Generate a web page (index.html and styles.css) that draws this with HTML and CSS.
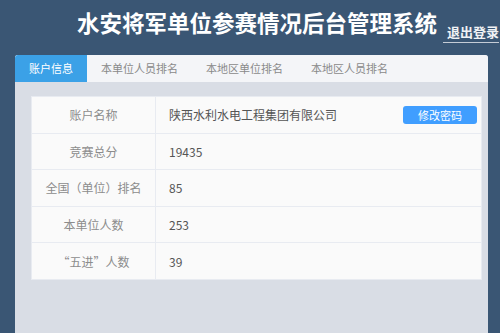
FILE: index.html
```html
<!DOCTYPE html>
<html lang="zh-CN">
<head>
  <meta charset="UTF-8">
  <title>水安将军单位参赛情况后台管理系统</title>
  <link rel="stylesheet" href="styles.css">
</head>
<body>
  <div class="header">
    <h1 class="title">水安将军单位参赛情况后台管理系统</h1>
    <a class="logout" href="#">退出登录</a>
  </div>

  <div class="panel">
    <div class="tabs">
      <div class="tab active">账户信息</div>
      <div class="tab">本单位人员排名</div>
      <div class="tab">本地区单位排名</div>
      <div class="tab">本地区人员排名</div>
    </div>

    <div class="content">
      <table class="info">
        <tr>
          <td class="label">账户名称</td>
          <td class="value">
            <span>陕西水利水电工程集团有限公司</span>
            <button class="btn">修改密码</button>
          </td>
        </tr>
        <tr>
          <td class="label">竞赛总分</td>
          <td class="value">19435</td>
        </tr>
        <tr>
          <td class="label">全国（单位）排名</td>
          <td class="value">85</td>
        </tr>
        <tr>
          <td class="label">本单位人数</td>
          <td class="value">253</td>
        </tr>
        <tr>
          <td class="label">“五进”人数</td>
          <td class="value">39</td>
        </tr>
      </table>
    </div>
  </div>
</body>
</html>
```

FILE: styles.css
```css
* {
  box-sizing: border-box;
}

body {
  margin: 0;
  height: 333px;
  overflow: hidden;
  background: #3a5674;
  font-family: "Noto Sans CJK SC", "Noto Sans", sans-serif;
}

.header {
  display: flex;
  align-items: flex-start;
  height: 55px;
  padding-left: 77px;
  white-space: nowrap;
}

.title {
  margin: 7px 0 0;
  font-size: 22.5px;
  line-height: 30px;
  font-weight: bold;
  color: #fff;
}

.logout {
  flex: none;
  margin: 23px 0 0 6px;
  padding: 0 0 2px 4px;
  font-size: 13px;
  line-height: 17px;
  font-weight: bold;
  color: #f0f2f5;
  text-decoration: none;
  border-bottom: 1px solid #c5ccd6;
}

.panel {
  margin: 0 12px 0 15px;
  height: 278px;
  background: #d9dde5;
  border-radius: 3px 3px 0 0;
  overflow: hidden;
}

.tabs {
  display: flex;
  height: 27px;
  background: #f4f5f8;
}

.tab {
  padding: 0 14px;
  font-size: 11px;
  line-height: 27px;
  color: #8a8a8a;
}

.tab.active {
  background: #3ba1e7;
  color: #fff;
}

.content {
  padding: 14px 6px 0 16px;
}

.info {
  width: 100%;
  border-collapse: collapse;
  background: #fafafa;
  font-size: 12px;
}

.info td {
  height: 36.6px;
  border: 1px solid #e8ebf1;
  padding: 0;
}

.label {
  width: 124px;
  text-align: center;
  color: #8c8c8c;
}

.value {
  padding-left: 13px !important;
  padding-right: 4px !important;
  color: #555;
}

.value span {
  line-height: 18px;
}

.btn {
  float: right;
  width: 74px;
  height: 18px;
  border: none;
  border-radius: 3px;
  background: #409eff;
  color: #fff;
  font-family: inherit;
  font-size: 11px;
  line-height: 18px;
  padding: 0;
  cursor: pointer;
}
```
